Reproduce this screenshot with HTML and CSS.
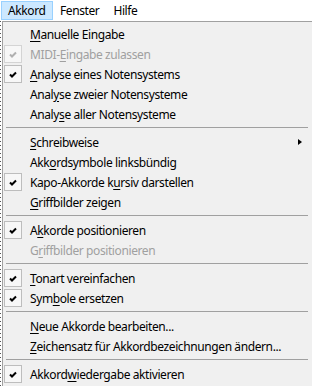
FILE: index.html
```html
<!DOCTYPE html>
<html lang="de">

<head>
  <meta charset="UTF-8">
  <title>Akkord</title>
  <link rel="stylesheet" href="styles.css">
</head>

<body>
  <div class="menubar">
    <div class="bar-item is-Open">Akkord</div>
    <div class="bar-item">Fenster</div>
    <div class="bar-item">Hilfe</div>
  </div>

  <div class="window">
    <div class="dropdown">
      <div class="item"><u>M</u>anuelle Eingabe</div>
      <div class="item is-Checked is-Disabled"><span class="check"><svg width="8" height="7" viewBox="0 0 8 7"><path d="M1 3.5 L3 5.5 L7 1.5" /></svg></span>MIDI-<u>E</u>ingabe zulassen</div>
      <div class="item is-Checked"><span class="check"><svg width="8" height="7" viewBox="0 0 8 7"><path d="M1 3.5 L3 5.5 L7 1.5" /></svg></span><u>A</u>nalyse eines Notensystems</div>
      <div class="item">Anal<u>y</u>se zweier Notensysteme</div>
      <div class="item">Analy<u>s</u>e aller Notensysteme</div>

      <div class="sep"></div>

      <div class="item is-Sub"><u>S</u>chreibweise</div>
      <div class="item">Akk<u>o</u>rdsymbole linksbündig</div>
      <div class="item is-Checked"><span class="check"><svg width="8" height="7" viewBox="0 0 8 7"><path d="M1 3.5 L3 5.5 L7 1.5" /></svg></span>Kapo-Akkorde k<u>u</u>rsiv darstellen</div>
      <div class="item"><u>G</u>riffbilder zeigen</div>

      <div class="sep"></div>

      <div class="item is-Checked"><span class="check"><svg width="8" height="7" viewBox="0 0 8 7"><path d="M1 3.5 L3 5.5 L7 1.5" /></svg></span>A<u>k</u>korde positionieren</div>
      <div class="item is-Disabled">G<u>r</u>iffbilder positionieren</div>

      <div class="sep"></div>

      <div class="item is-Checked"><span class="check"><svg width="8" height="7" viewBox="0 0 8 7"><path d="M1 3.5 L3 5.5 L7 1.5" /></svg></span><u>T</u>onart vereinfachen</div>
      <div class="item is-Checked"><span class="check"><svg width="8" height="7" viewBox="0 0 8 7"><path d="M1 3.5 L3 5.5 L7 1.5" /></svg></span>Sym<u>b</u>ole ersetzen</div>

      <div class="sep"></div>

      <div class="item"><u>N</u>eue Akkorde bearbeiten...</div>
      <div class="item"><u>Z</u>eichensatz für Akkordbezeichnungen ändern...</div>

      <div class="sep"></div>

      <div class="item is-Checked"><span class="check"><svg width="8" height="7" viewBox="0 0 8 7"><path d="M1 3.5 L3 5.5 L7 1.5" /></svg></span>Akkord<u>w</u>iedergabe aktivieren</div>
    </div>
  </div>
</body>

</html>
```

FILE: styles.css
```css
* {
  box-sizing: border-box;
}

body {
  margin: 0;
  width: 312px;
  height: 386px;
  overflow: hidden;
  background: #fff;
  font-family: "Noto Sans", "Open Sans", sans-serif;
  font-size: 12px;
  letter-spacing: -0.4px;
  color: #000;
}

/* Menüleiste oben */
.menubar {
  height: 21px;
  display: flex;
  align-items: flex-start;
  padding-left: 1px;
}

.bar-item {
  height: 19px;
  margin-top: 1px;
  padding: 0 6px 0 6px;
  line-height: 17px;
  border: 1px solid transparent;
}

.bar-item.is-Open {
  width: 52px;
  background: #cce8ff;
  border-color: #99d1ff;
}

/* Fensterrand links (Hintergrundfenster) */
.window {
  padding-left: 2px;
  background: repeating-linear-gradient(to bottom, #555 0 1px, #fff 1px 4px) 0 0 / 1px 100% no-repeat, #fff;
  height: 365px;
}

.dropdown {
  height: 100%;
  background: #f0f0f0;
  border-left: 1px solid #a0a0a0;
  border-top: 1px solid #a0a0a0;
  padding-top: 2px;
}

.item {
  position: relative;
  height: 20px;
  line-height: 21px;
  padding-left: 27px;
  white-space: nowrap;
}

.item u {
  text-decoration-thickness: 1px;
  text-underline-offset: 2px;
}

.item.is-Disabled {
  color: #a0a0a0;
}

.check {
  position: absolute;
  left: 1px;
  top: 1px;
  width: 18px;
  height: 18px;
  border: 1px solid #bdbdbd;
  background: #f7f7f7;
  display: flex;
  align-items: center;
  justify-content: center;
}

.check svg path {
  fill: none;
  stroke: #000;
  stroke-width: 2;
}

.is-Disabled .check {
  border-color: #d4d4d4;
}

.is-Disabled .check svg path {
  stroke: #b0b0b0;
}

/* Pfeil für Untermenü */
.item.is-Sub::after {
  content: '';
  position: absolute;
  right: 10px;
  top: 7px;
  border-left: 4px solid #000;
  border-top: 3.5px solid transparent;
  border-bottom: 3.5px solid transparent;
}

.sep {
  height: 8px;
  padding: 3px 4px 0 3px;
}

.sep::before {
  content: '';
  display: block;
  height: 1px;
  background: #a0a0a0;
}
```
